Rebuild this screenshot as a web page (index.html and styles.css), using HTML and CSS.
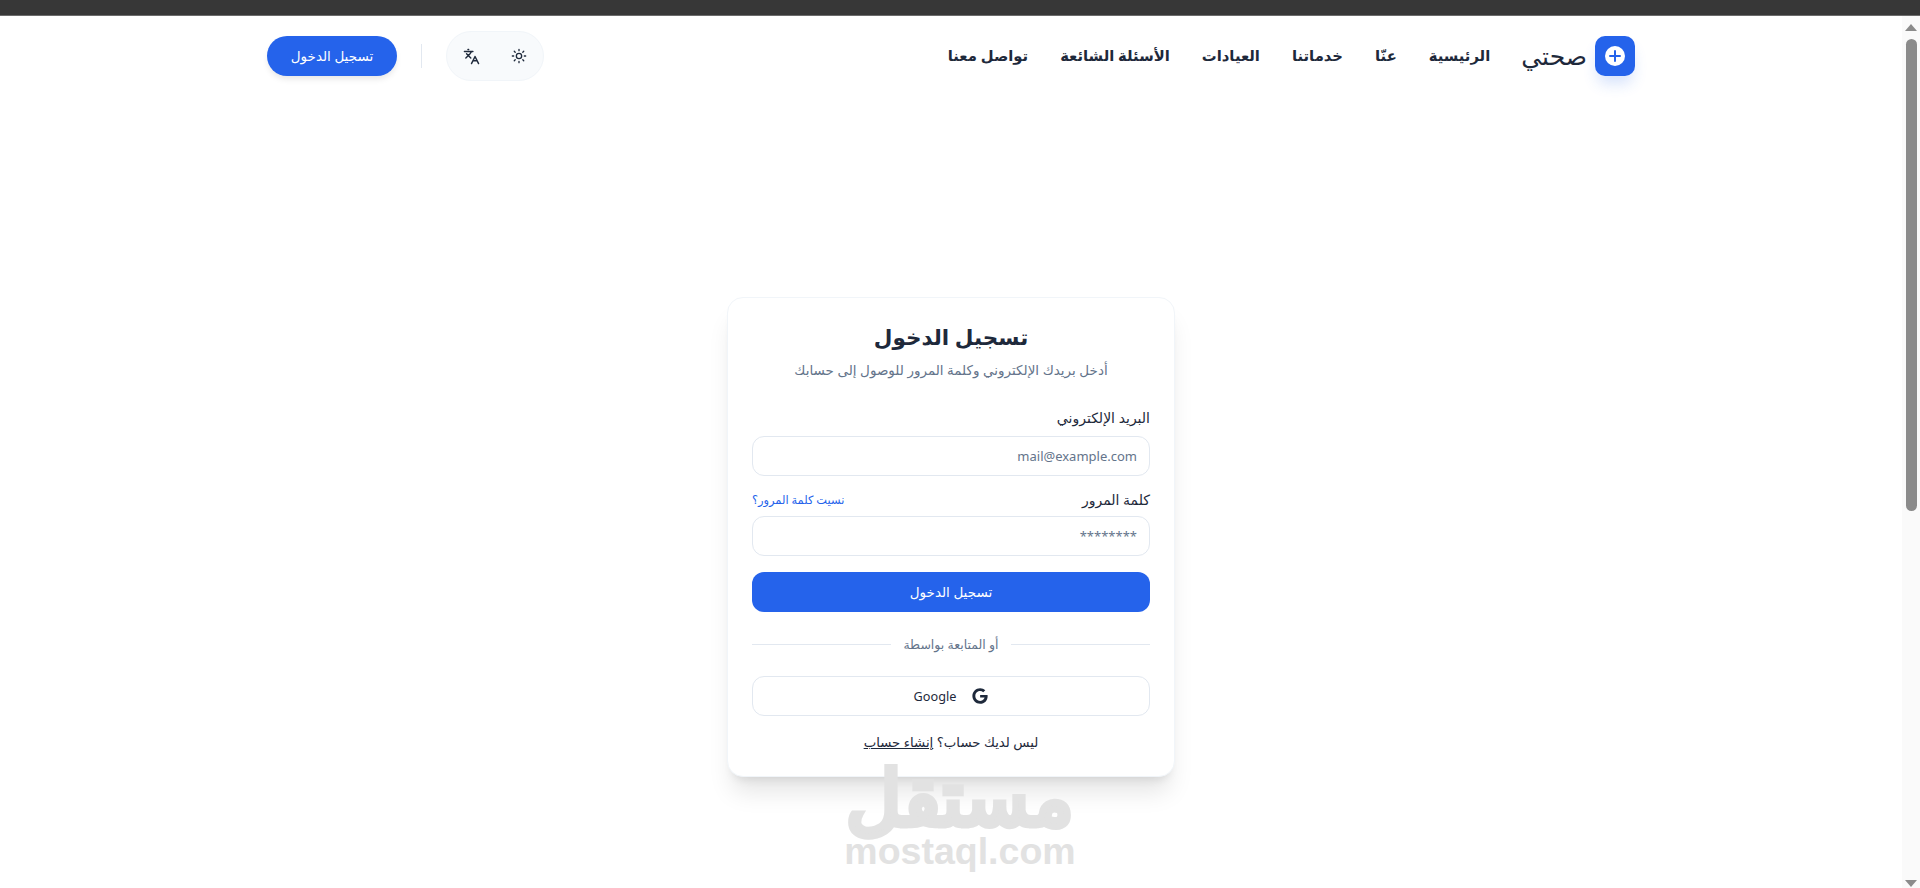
FILE: index.html
```html
<!DOCTYPE html>
<html lang="ar" dir="rtl">
<head>
    <meta charset="UTF-8">
    <meta name="viewport" content="width=device-width, initial-scale=1.0">
    <title>صحتي - تسجيل الدخول</title>
    <link rel="stylesheet" href="styles.css">
</head>
<body>
    <div class="topbar"></div>
    <div class="window">
        <div class="scrollbar">
            <span class="arrow arrow-up"></span>
            <div class="track"><div class="thumb"></div></div>
            <span class="arrow arrow-down"></span>
        </div>
        <div class="page">
            <header class="header">
                <div class="header-inner">
                    <a class="logo" href="#">
                        <span class="logo-box">
                            <svg width="24" height="24" viewBox="0 0 24 24">
                                <circle cx="12" cy="12" r="10" fill="#fff"/>
                                <path d="M12 7v10M7 12h10" stroke="#2563eb" stroke-width="2" stroke-linecap="round"/>
                            </svg>
                        </span>
                        <span class="logo-text">صحتي</span>
                    </a>
                    <nav class="nav">
                        <a href="#">الرئيسية</a>
                        <a href="#">عنّا</a>
                        <a href="#">خدماتنا</a>
                        <a href="#">العيادات</a>
                        <a href="#">الأسئلة الشائعة</a>
                        <a href="#">تواصل معنا</a>
                    </nav>
                    <div class="actions">
                        <div class="toggles">
                            <button class="icon-btn" aria-label="theme">
                                <svg width="16" height="16" viewBox="0 0 24 24" fill="none" stroke="#1e293b" stroke-width="2" stroke-linecap="round">
                                    <circle cx="12" cy="12" r="4"/>
                                    <path d="M12 2v2M12 20v2M4.9 4.9l1.4 1.4M17.7 17.7l1.4 1.4M2 12h2M20 12h2M4.9 19.1l1.4-1.4M17.7 6.3l1.4-1.4"/>
                                </svg>
                            </button>
                            <button class="icon-btn" aria-label="language">
                                <svg width="17" height="17" viewBox="0 0 24 24" fill="none" stroke="#1e293b" stroke-width="2" stroke-linecap="round" stroke-linejoin="round">
                                    <path d="M5 8l6 6M4 14l6-6 2-3M2 5h12M7 2h1M22 22l-5-10-5 10M14 18h6"/>
                                </svg>
                            </button>
                        </div>
                        <span class="vline"></span>
                        <a class="login-pill" href="#">تسجيل الدخول</a>
                    </div>
                </div>
            </header>
            <main class="main">
                <form class="card">
                    <h1>تسجيل الدخول</h1>
                    <p class="sub">أدخل بريدك الإلكتروني وكلمة المرور للوصول إلى حسابك</p>
                    <div class="field">
                        <label for="email">البريد الإلكتروني</label>
                        <input id="email" type="text" placeholder="mail@example.com">
                    </div>
                    <div class="field field-pass">
                        <div class="label-row">
                            <label for="password">كلمة المرور</label>
                            <a href="#">نسيت كلمة المرور؟</a>
                        </div>
                        <input id="password" type="text" placeholder="********">
                    </div>
                    <button class="submit" type="button">تسجيل الدخول</button>
                    <div class="divider"><span>أو المتابعة بواسطة</span></div>
                    <button class="google" type="button">
                        <svg width="16" height="16" viewBox="0 0 488 512"><path fill="#1e293b" d="M488 261.8C488 403.3 391.1 504 248 504 110.8 504 0 393.2 0 256S110.8 8 248 8c66.8 0 123 24.5 166.3 64.9l-67.5 64.9C258.5 52.6 94.3 116.6 94.3 256c0 86.5 69.1 156.6 153.7 156.6 98.2 0 135-70.4 140.8-106.9H248v-85.3h236.1c2.3 12.7 3.9 24.9 3.9 41.4z"/></svg>
                        <span>Google</span>
                    </button>
                    <p class="signup">ليس لديك حساب؟ <a href="#">إنشاء حساب</a></p>
                </form>
            </main>
        </div>
    </div>
    <div class="watermark">
        <span class="wm-ar">مستقل</span>
        <span class="wm-en">mostaql.com</span>
    </div>
</body>
</html>
```

FILE: styles.css
```css
* {
    box-sizing: border-box;
}

html, body {
    height: 100%;
}

body {
    margin: 0;
    display: flex;
    flex-direction: column;
    overflow: hidden;
    background: #fff;
    color: #1e293b;
    font-family: "Noto Sans", "DejaVu Sans", sans-serif;
}

a {
    color: inherit;
    text-decoration: none;
}

.topbar {
    height: 16px;
    flex: none;
    background: #373737;
    border-bottom: 1px solid #6b6b6b;
}

.window {
    flex: 1;
    display: flex;
    min-height: 0;
}

.page {
    flex: 1;
    min-width: 0;
}

/* drawn scrollbar, it sits on the right of the rtl row */
.scrollbar {
    width: 18px;
    flex: none;
    display: flex;
    flex-direction: column;
    align-items: center;
    background: #fafafa;
}

.arrow {
    flex: none;
    display: flex;
    align-items: center;
}

.arrow::before {
    content: "";
    border-left: 6.5px solid transparent;
    border-right: 6.5px solid transparent;
}

.arrow-up {
    height: 23px;
}

.arrow-down {
    height: 9px;
}

.arrow-up::before {
    border-bottom: 7px solid #8b8b8b;
}

.arrow-down::before {
    border-top: 7px solid #8b8b8b;
}

.track {
    flex: 1;
    width: 100%;
    padding: 0 3px 0 4px;
}

.thumb {
    height: 472px;
    background: #8b8b8b;
    border-radius: 6px;
}

.header {
    height: 80px;
}

.header-inner {
    width: 1400px;
    height: 100%;
    margin: 0 auto;
    padding: 0 16px;
    display: flex;
    align-items: center;
    justify-content: space-between;
}

.logo {
    display: flex;
    align-items: center;
    gap: 8px;
}

.logo-box {
    width: 40px;
    height: 40px;
    display: flex;
    align-items: center;
    justify-content: center;
    background: #2563eb;
    border-radius: 10px;
    box-shadow: 0 10px 15px -3px rgba(37, 99, 235, 0.2);
}

.logo-text {
    padding-bottom: 2px;
    font-size: 25px;
    font-weight: 500;
}

.nav {
    display: flex;
    gap: 32px;
    margin-right: 31px;
    margin-left: auto;
    padding-bottom: 2px;
    font-size: 14.8px;
    font-weight: 600;
}

.actions {
    display: flex;
    align-items: center;
    gap: 24px;
}

.toggles {
    display: flex;
    gap: 8px;
    height: 50px;
    padding: 4px;
    align-items: center;
    background: #f8fafc;
    border: 1px solid #f1f5f9;
    border-radius: 25px;
}

.icon-btn {
    width: 40px;
    height: 40px;
    display: flex;
    align-items: center;
    justify-content: center;
    padding: 0;
    border: 0;
    background: none;
}

.vline {
    width: 1px;
    height: 24px;
    background: #e2e8f0;
}

.login-pill {
    width: 130px;
    height: 40px;
    display: flex;
    align-items: center;
    justify-content: center;
    color: #fff;
    background: #2563eb;
    border-radius: 20px;
    font-size: 13.5px;
    font-weight: 500;
    box-shadow: 0 4px 6px -1px rgba(0, 0, 0, 0.1);
}

.main {
    display: flex;
    justify-content: center;
    padding-top: 201px;
}

.card {
    width: 448px;
    height: 480px;
    padding: 23px 24px 24px;
    background: #fff;
    border: 1px solid #f1f5f9;
    border-radius: 16px;
    box-shadow: 0 20px 25px -5px rgba(0, 0, 0, 0.1), 0 8px 10px -6px rgba(0, 0, 0, 0.1);
}

.card h1 {
    margin: 0;
    text-align: center;
    font-size: 21.5px;
    font-weight: 700;
    line-height: 32px;
}

.sub {
    margin: 7px 0 0;
    text-align: center;
    font-size: 13.5px;
    line-height: 20px;
    color: #64748b;
}

.field {
    margin-top: 28px;
}

.field-pass {
    margin-top: 14px;
}

.field label {
    display: block;
    font-size: 14px;
    line-height: 20px;
    font-weight: 500;
}

.label-row {
    display: flex;
    justify-content: space-between;
    align-items: center;
}

.label-row a {
    padding-bottom: 2px;
    font-size: 11.4px;
    color: #2563eb;
}

.field input {
    display: block;
    width: 100%;
    height: 40px;
    margin-top: 8px;
    padding: 0 12px;
    border: 1px solid #e2e8f0;
    border-radius: 12px;
    font: inherit;
    font-size: 13px;
    outline: none;
}

.field-pass input {
    margin-top: 6px;
}

.field input::placeholder {
    color: #64748b;
}

.submit {
    display: block;
    width: 100%;
    height: 40px;
    margin-top: 16px;
    border: 0;
    border-radius: 12px;
    background: #2563eb;
    color: #fff;
    font: inherit;
    font-size: 13.5px;
    font-weight: 500;
}

.divider {
    display: flex;
    align-items: center;
    gap: 12px;
    margin-top: 24px;
    font-size: 12.5px;
    color: #64748b;
}

.divider::before,
.divider::after {
    content: "";
    flex: 1;
    height: 1px;
    background: #e2e8f0;
}

.google {
    display: flex;
    align-items: center;
    justify-content: center;
    gap: 16px;
    width: 100%;
    height: 40px;
    margin-top: 23px;
    border: 1px solid #e2e8f0;
    border-radius: 12px;
    background: #fff;
    color: #1e293b;
    font: inherit;
    font-size: 12.7px;
}

.signup {
    margin: 16px 0 0;
    text-align: center;
    font-size: 13.3px;
    line-height: 20px;
}

.signup a {
    text-decoration: underline;
}

/* image watermark of the source site, lies over the page */
.watermark {
    position: absolute;
    left: 810px;
    top: 766px;
    width: 300px;
    display: flex;
    flex-direction: column;
    align-items: center;
    color: #e2e2e2;
    font-family: "Liberation Sans", sans-serif;
    font-weight: 700;
    pointer-events: none;
}

.wm-ar {
    font-size: 76px;
    line-height: 65px;
    -webkit-text-stroke: 4px #e2e2e2;
}

.wm-en {
    font-size: 37.5px;
    line-height: 40px;
}
```
